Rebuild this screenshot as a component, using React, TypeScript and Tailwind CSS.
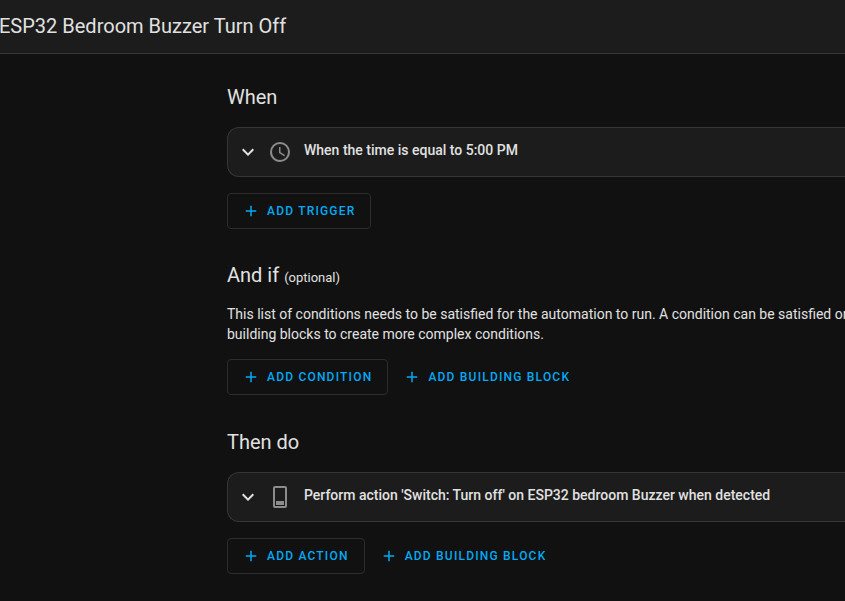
import type { ReactNode } from "react";

const icons = {
  plus: "M19,13H13V19H11V13H5V11H11V5H13V11H19V13Z",
  chevronDown: "M7.41,8.58L12,13.17L16.59,8.58L18,10L12,16L6,10L7.41,8.58Z",
  clock:
    "M12,20A8,8 0 0,0 20,12A8,8 0 0,0 12,4A8,8 0 0,0 4,12A8,8 0 0,0 12,20M12,2A10,10 0 0,1 22,12A10,10 0 0,1 12,22C6.47,22 2,17.5 2,12A10,10 0 0,1 12,2M12.5,7V12.25L17,14.92L16.25,16.15L11,13V7H12.5Z",
  device:
    "M7,1H17A2,2 0 0,1 19,3V21A2,2 0 0,1 17,23H7A2,2 0 0,1 5,21V3A2,2 0 0,1 7,1M7,3V21H17V3H7M8,16H16V20H8V16Z",
};

function Icon({ path, className }: { path: string; className: string }) {
  return (
    <svg viewBox="0 0 24 24" className={`shrink-0 fill-current ${className}`} aria-hidden="true">
      <path d={path} />
    </svg>
  );
}

function AddButton({ label, outlined = false }: { label: string; outlined?: boolean }) {
  return (
    <button
      type="button"
      className={`flex h-9 items-center gap-[7px] rounded border pr-[15px] pl-3.5 text-xs font-medium tracking-widest text-[#03a9f4] uppercase ${
        outlined ? "border-[#2c2c2c]" : "border-transparent"
      }`}
    >
      <Icon path={icons.plus} className="size-[18px]" />
      {label}
    </button>
  );
}

function RowCard({ icon, title }: { icon: string; title: string }) {
  return (
    <div className="flex h-[50px] items-center rounded-l-xl border border-r-0 border-[#363636] bg-[#1c1c1c] pl-2">
      <button type="button" aria-label="Expand" className="flex size-6 items-center justify-center text-[#e1e1e1]">
        <Icon path={icons.chevronDown} className="size-6" />
      </button>
      <Icon path={icon} className="ml-2 size-6 text-[#8c8c8c]" />
      <h3 className="ml-3 pb-1 text-sm font-medium whitespace-nowrap">{title}</h3>
    </div>
  );
}

function Section({ title, note, children }: { title: string; note?: string; children: ReactNode }) {
  return (
    <section>
      <h2 className="text-xl leading-7">
        {title} {note && <span className="text-[13px]">{note}</span>}
      </h2>
      {children}
    </section>
  );
}

export default function App() {
  return (
    <div className="min-h-screen overflow-hidden bg-[#111111] font-[Roboto,sans-serif] text-[#e1e1e1]">
      <header className="flex h-[54px] items-center border-b border-[#363636] bg-[#1c1c1c]">
        <h1 className="-ml-px pb-0.5 text-xl leading-7 whitespace-nowrap">ESP32 Bedroom Buzzer Turn Off</h1>
      </header>
      <main className="flex flex-col gap-8 pt-[29px] pb-7 pl-[227px]">
        <Section title="When">
          <div className="mt-4">
            <RowCard icon={icons.clock} title="When the time is equal to 5:00 PM" />
          </div>
          <div className="mt-4 flex">
            <AddButton label="Add trigger" outlined />
          </div>
        </Section>
        <Section title="And if" note="(optional)">
          <p className="mt-3 text-sm leading-5 whitespace-nowrap">
            This list of conditions needs to be satisfied for the automation to run. A condition can be satisfied or
            <br />
            building blocks to create more complex conditions.
          </p>
          <div className="mt-[15px] flex pb-px">
            <AddButton label="Add condition" outlined />
            <AddButton label="Add building block" />
          </div>
        </Section>
        <Section title="Then do">
          <div className="mt-4">
            <RowCard
              icon={icons.device}
              title="Perform action 'Switch: Turn off' on ESP32 bedroom Buzzer when detected"
            />
          </div>
          <div className="mt-4 flex">
            <AddButton label="Add action" outlined />
            <AddButton label="Add building block" />
          </div>
        </Section>
      </main>
    </div>
  );
}
